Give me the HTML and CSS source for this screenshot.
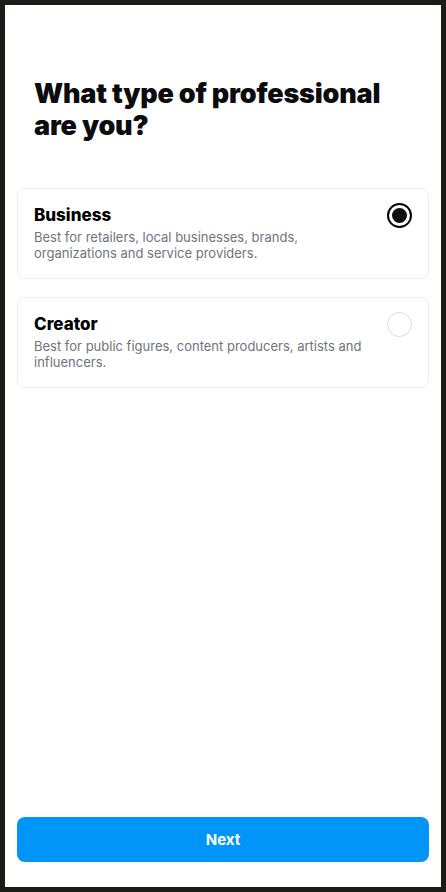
FILE: index.html
```html
<!DOCTYPE html>
<html lang="en">
<head>
<meta charset="utf-8">
<title>What type of professional are you?</title>
<link rel="stylesheet" href="styles.css">
</head>
<body>
<div class="screen">
  <main class="content">
    <h1 class="title">What type of professional are you?</h1>
    <div class="options">
      <label class="option">
        <div class="option-text">
          <div class="option-title">Business</div>
          <div class="option-desc">Best for retailers, local businesses, brands, organizations and service providers.</div>
        </div>
        <span class="radio radio-checked"><span class="radio-dot"></span></span>
      </label>
      <label class="option">
        <div class="option-text">
          <div class="option-title">Creator</div>
          <div class="option-desc">Best for public figures, content producers, artists and influencers.</div>
        </div>
        <span class="radio"></span>
      </label>
    </div>
  </main>
  <footer class="footer">
    <button class="next-btn" type="button">Next</button>
  </footer>
</div>
</body>
</html>
```
FILE: styles.css
```css
* { box-sizing: border-box; }
html, body { height: 100%; }
body {
  margin: 0;
  background: #1c1b17;
  padding: 5px;
  font-family: Inter, "Noto Sans", "Liberation Sans", sans-serif;
}
.screen {
  background: #ffffff;
  height: 882px;
  display: flex;
  flex-direction: column;
}
.content {
  flex: 1;
  padding: 0 12px;
}
.title {
  margin: 73px 0 0 17px;
  max-width: 370px;
  font-size: 27px;
  line-height: 32px;
  font-weight: 900;
  color: #0c0c0f;
  letter-spacing: -0.2px;
}
.options {
  margin-top: 46px;
  display: flex;
  flex-direction: column;
  gap: 18px;
}
.option {
  display: flex;
  align-items: flex-start;
  justify-content: space-between;
  border: 1px solid #efefef;
  border-radius: 8px;
  height: 91px;
  padding: 14px 16px 0 16px;
}
.option-title {
  font-size: 17px;
  line-height: 24px;
  font-weight: 800;
  color: #000;
}
.option-desc {
  margin-top: 2px;
  font-size: 13px;
  line-height: 16px;
  color: #6f737c;
  max-width: 340px;
}
.radio {
  flex: none;
  width: 25px;
  height: 25px;
  border-radius: 50%;
  border: 1.5px solid #dbdbdb;
  margin-top: 0;
  display: flex;
  align-items: center;
  justify-content: center;
}
.radio-checked {
  border: 2.5px solid #000;
}
.radio-dot {
  width: 15px;
  height: 15px;
  border-radius: 50%;
  background: #0d0d12;
}
.footer {
  padding: 0 12px 25px 12px;
}
.next-btn {
  width: 100%;
  height: 45px;
  border: none;
  border-radius: 8px;
  background: #0095f6;
  color: #fff;
  font-family: Inter, "Noto Sans", "Liberation Sans", sans-serif;
  font-size: 15px;
  font-weight: 700;
}
```
